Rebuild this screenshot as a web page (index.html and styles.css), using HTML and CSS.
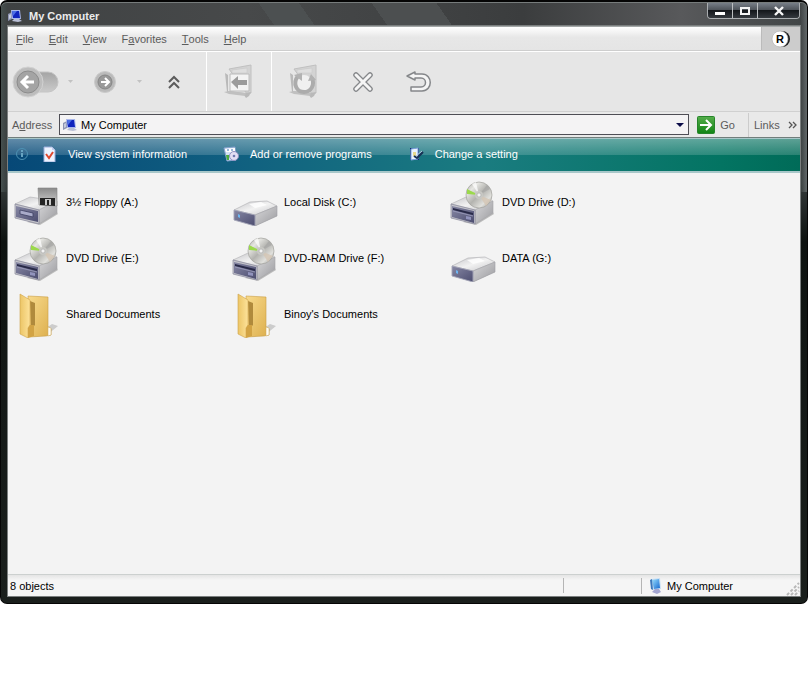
FILE: index.html
```html
<!DOCTYPE html>
<html lang="en">
<head>
<meta charset="utf-8">
<title>My Computer</title>
<link rel="stylesheet" href="styles.css">
</head>
<body>
<svg class="defs" aria-hidden="true">
  <defs>
    <linearGradient id="g-side" x1="0" y1="0" x2="1" y2="1"><stop offset="0" stop-color="#d8d8da"/><stop offset="1" stop-color="#9a9a9e"/></linearGradient>
    <linearGradient id="g-top" x1="0" y1="0" x2="1" y2="1"><stop offset="0" stop-color="#c4c4c8"/><stop offset=".5" stop-color="#f2f2f2"/><stop offset="1" stop-color="#c6c6ca"/></linearGradient>
    <linearGradient id="g-front" x1="0" y1="0" x2="1" y2="1"><stop offset="0" stop-color="#8788a4"/><stop offset="1" stop-color="#4c4d70"/></linearGradient>
    <linearGradient id="g-disc" x1="0" y1="0" x2="1" y2="1"><stop offset="0" stop-color="#aaaaa4"/><stop offset=".25" stop-color="#e6e6e2"/><stop offset=".5" stop-color="#b3b3af"/><stop offset=".75" stop-color="#e0e0dc"/><stop offset="1" stop-color="#919191"/></linearGradient>
    <linearGradient id="g-metal" x1="0" y1="0" x2="0" y2="1"><stop offset="0" stop-color="#8a8a8a"/><stop offset="1" stop-color="#d6d6d6"/></linearGradient>
    <linearGradient id="g-folder" x1="0" y1="0" x2="1" y2="1"><stop offset="0" stop-color="#f8da8c"/><stop offset="1" stop-color="#dcae4c"/></linearGradient>
    <linearGradient id="g-flap" x1="0" y1="0" x2="1" y2="0"><stop offset="0" stop-color="#ecc566"/><stop offset="1" stop-color="#fde29a"/></linearGradient>
    <linearGradient id="g-nav" x1="0" y1="0" x2="0" y2="1"><stop offset="0" stop-color="#a4a4a4"/><stop offset="1" stop-color="#cbcbcb"/></linearGradient>
    <linearGradient id="g-screen" x1="0" y1="0" x2="1" y2="1"><stop offset="0" stop-color="#9ae0ff"/><stop offset="1" stop-color="#1668cf"/></linearGradient>
    <linearGradient id="g-go" x1="0" y1="0" x2="0" y2="1"><stop offset="0" stop-color="#55ad4b"/><stop offset="1" stop-color="#118415"/></linearGradient>
  </defs>
  <symbol id="i-computer" viewBox="0 0 14 14">
    <path d="M0 5l4-2v7l-4 2z" fill="#8d93b2"/><path d="M1 6l2-1v4l-2 1z" fill="#c6cbdc"/>
    <path d="M3 1l9 0 1 9-9 0z" fill="#a9b6ea"/><path d="M4 2l7 0 1 7-7 0z" fill="#1023bd"/><path d="M4 2l5 0-4 5z" fill="#4d6ee4"/>
    <path d="M6 10l5 0 3 2-4 1-6-1z" fill="#b9bfd6"/>
  </symbol>
  <symbol id="i-unit" viewBox="0 0 48 48">
    <path d="M14 44l13 3 18-11-3-5z" fill="#bbb"/>
    <path d="M2 26l15-7 27 4-18 9z" fill="url(#g-top)" stroke="#b0b0b4" stroke-width=".6"/>
    <path d="M26 32l18-9v12l-18 11z" fill="url(#g-side)" stroke="#a4a4a8" stroke-width=".6"/>
    <path d="M2 26l24 6v14l-24-6z" fill="#c6c6cc" stroke="#85859a" stroke-width=".7"/>
  </symbol>
  <symbol id="i-floppy" viewBox="0 0 48 48">
    <use href="#i-unit"/>
    <path d="M3 28l22 5v11l-22-5z" fill="url(#g-front)"/><path d="M7 32l13 3v4l-13-3z" fill="#a9abc9" stroke="#3e4062" stroke-width=".8"/>
    <path d="M25 10h19v18l-18-1z" fill="url(#g-metal)" stroke="#858585" stroke-width=".6"/>
    <path d="M27 20h15v8l-15-1z" fill="#242424"/><path d="M32 21h6v6h-6z" fill="#c9c9c9"/><path d="M34 22h2v5h-2z" fill="#202020"/>
  </symbol>
  <symbol id="i-dvd" viewBox="0 0 48 48">
    <use href="#i-unit"/>
    <path d="M3 28l22 5v12l-22-6z" fill="url(#g-front)"/><path d="M4 30l20 5v2l-20-5z" fill="#282a48"/><path d="M4 33l20 5" stroke="#9fa1c0" stroke-width=".8"/><path d="M17 38l5 1v3l-5-1z" fill="#9193bc"/>
    <circle cx="30" cy="17" r="13" fill="url(#g-disc)" stroke="#a0a09c" stroke-width=".7"/>
    <path d="M30 17L18 16l0-5z" fill="#9bd94b"/><path d="M30 17L23 6l4-2z" fill="#fff" opacity=".7"/><path d="M30 17l12 5-5 6z" fill="#d5c5b4" opacity=".8"/><path d="M30 17L38 7l3 4z" fill="#a7a7a5" opacity=".7"/>
    <circle cx="30" cy="17" r="4" fill="#c8c8c4"/><circle cx="30" cy="17" r="2" fill="#f3f3f3" stroke="#aaa" stroke-width=".6"/>
  </symbol>
  <symbol id="i-disk" viewBox="0 0 48 48">
    <path d="M14 45l10 3 22-10-3-5z" fill="#bbb"/>
    <path d="M3 32l16-8 17-1 10 5-22 9z" fill="url(#g-top)" stroke="#acacb0" stroke-width=".6"/>
    <path d="M24 37l22-9v10l-22 10z" fill="url(#g-side)" stroke="#a0a0a4" stroke-width=".6"/>
    <path d="M3 32l21 5v11l-21-6z" fill="url(#g-front)" stroke="#a5a6b8" stroke-width=".9"/>
    <path d="M18 26l12-2 6 3-12 3z" fill="#fff" opacity=".8"/><path d="M7 36l2 1v3l-2-1z" fill="#6eb6f2"/>
  </symbol>
  <symbol id="i-folder" viewBox="0 0 48 48">
    <path d="M20 47l19-13 6 2-11 9z" fill="#ccc"/>
    <path d="M15 6l20 1v30l3 2v6l-5 1-17 1z" fill="url(#g-folder)" stroke="#c99d45" stroke-width=".6"/>
    <path d="M17 11l5 2v22l-4 4z" fill="#b08a3c"/>
    <path d="M35 37l3 1v7l-3 1z" fill="#fffdf4" stroke="#c9a75b" stroke-width=".5"/>
    <path d="M7 4l10 6v25l-2 3v10l-8-4z" fill="url(#g-flap)" stroke="#cfa24b" stroke-width=".6"/>
    <path d="M17 35l4 0v11l-6 2V38z" fill="#d2a344"/>
  </symbol>
  <symbol id="i-bin" viewBox="0 0 32 36">
    <path d="M6 5l22-4v28l-4 1z" fill="#d3d3d3" stroke="#c0c0c0"/><path d="M9 6l15-2v5H9z" fill="#dedede" stroke="#c4c4c4" stroke-width=".5"/>
    <path d="M2 9l3 2v16l17 2 6-1-2 4-3 2-2-3-10-1-7-2z" fill="#b9b9b9"/><path d="M1 28l5-1 17 2-1 3-16-2z" fill="#c0c0c0"/>
  </symbol>
</svg>

<main class="window">
  <header class="titlebar">
    <svg class="icon14"><use href="#i-computer"/></svg>
    <h1>My Computer</h1>
    <div class="controls">
      <button aria-label="Minimize"><svg width="12" height="10"><path d="M1 6h10v3H1z" fill="#fff"/></svg></button>
      <button aria-label="Maximize"><svg width="12" height="10"><path d="M2 2h8v6H2z" fill="none" stroke="#f4f4f4" stroke-width="2"/></svg></button>
      <button class="close" aria-label="Close"><svg width="12" height="10"><path d="M2 1l8 8M10 1L2 9" stroke="#f6f6f6" stroke-width="2.4"/></svg></button>
    </div>
  </header>

  <div class="client">
    <nav class="menubar">
      <button><u>F</u>ile</button><button><u>E</u>dit</button><button><u>V</u>iew</button><button>F<u>a</u>vorites</button><button><u>T</u>ools</button><button><u>H</u>elp</button>
      <span class="brand"><svg width="20" height="20"><circle cx="11" cy="10" r="8" fill="#1b1b1b"/><circle cx="9" cy="10" r="8" fill="#fff" stroke="#aaa" stroke-width=".6"/></svg><b>R</b></span>
    </nav>

    <div class="toolbar">
      <div class="group nav-group">
        <button aria-label="Back"><svg width="48" height="32">
          <rect x="12" y="6" width="34" height="20" rx="10" fill="url(#g-nav)" stroke="#c4c4c4"/>
          <circle cx="16" cy="16" r="15" fill="#bdbdbd" stroke="#d2d2d2"/><circle cx="16" cy="16" r="11" fill="#a4a4a4" stroke="#8c8c8c"/>
          <path d="M22 16H11M16 10l-6 6 6 6" fill="none" stroke="#fff" stroke-width="3"/></svg></button>
        <button class="drop" aria-label="Back history"><svg width="5" height="3"><path d="M0 0h5L2.500 3z" fill="#c2c2c2"/></svg></button>
        <button aria-label="Forward"><svg width="24" height="24"><circle cx="12" cy="12" r="10.500" fill="#bababa" stroke="#cbcbcb"/><circle cx="12" cy="12" r="7" fill="#999" stroke="#868686"/><path d="M8 12h7M12 8l4 4-4 4" fill="none" stroke="#fff" stroke-width="2"/></svg></button>
        <button class="drop next" aria-label="Forward history"><svg width="5" height="3"><path d="M0 0h5L2.500 3z" fill="#c2c2c2"/></svg></button>
        <button aria-label="Up"><svg width="12" height="14"><path d="M1 7l5-5 5 5M1 13l5-5 5 5" fill="none" stroke="#5c5c5c" stroke-width="2"/></svg></button>
      </div>
      <div class="group move-group">
        <button aria-label="Move to"><svg width="32" height="36"><use href="#i-bin"/><path d="M7 10h19v17H7z" fill="#f3f3f3" stroke="#bcbcbc"/><path d="M8 18l7-6v4h9v5h-9v4z" fill="#9b9b9b"/></svg></button>
      </div>
      <div class="group edit-group">
        <button aria-label="Refresh"><svg width="32" height="36"><use href="#i-bin"/><circle cx="16" cy="19" r="8" fill="#f0f0f0"/><path d="M10 12c-6 8-1 16 6 16 7 0 11-7 8-14" fill="none" stroke="#acacac" stroke-width="4"/><path d="M6 11l8-2 0 8zM20 17l3-7 5 6z" fill="#b2b2b2"/></svg></button>
        <button aria-label="Delete"><svg width="22" height="22"><g stroke-linecap="round" fill="none"><path d="M4 4l14 14M18 4L4 18" stroke="#85878a" stroke-width="5.500"/><path d="M4 4l14 14M18 4L4 18" stroke="#f5f5f5" stroke-width="3"/></g></svg></button>
        <button aria-label="Undo"><svg width="26" height="24"><path d="M1 6l8-4v2h7c11 0 11 17 0 17H5v-4h10c6 0 6-9 0-9H9v2z" fill="#f5f5f5" stroke="#85878a" stroke-width="1.500" stroke-linejoin="round"/></svg></button>
      </div>
    </div>

    <form class="addressbar">
      <label for="address">A<u>d</u>dress</label>
      <div class="combo">
        <svg class="icon14"><use href="#i-computer"/></svg>
        <input id="address" type="text" value="My Computer">
        <button type="button" aria-label="Show addresses"><svg width="8" height="4"><path d="M0 0h8L4 4z" fill="#0c0c48"/></svg></button>
      </div>
      <button class="go" type="button"><svg width="18" height="18"><rect x=".5" y=".5" width="17" height="17" rx="1" fill="url(#g-go)" stroke="#26852a"/><path d="M3 9h11M9 4l5 5-5 5" fill="none" stroke="#fff" stroke-width="2"/></svg>Go</button>
      <button class="links" type="button">Links<svg width="9" height="8"><path d="M1 1l3 3-3 3M5 1l3 3-3 3" fill="none" stroke="#555" stroke-width="1.300"/></svg></button>
    </form>

    <div class="tasks">
      <svg class="info" width="14" height="14"><circle cx="7" cy="7" r="5.500" fill="none" stroke="#4d91b3"/><path d="M7 6v4M7 3v2" stroke="#67a4c2" stroke-width="2"/></svg>
      <a href="#info"><svg width="16" height="16"><path d="M3 1h8l3 3v12H3z" fill="#edf3ff" stroke="#9daedb"/><path d="M11 1v3h3" fill="#c4d0ef"/><path d="M5 8l3 4 4-6" fill="none" stroke="#df4930" stroke-width="2"/></svg>View system information</a>
      <a href="#programs"><svg width="16" height="16"><path d="M1 2l11-1 1 13-9 1z" fill="#d5e2f6" stroke="#87a2cc"/><path d="M2 3l10-1v4H3z" fill="#fff"/><path d="M4 4h2M8 4h2" stroke="#3c70b6"/><path d="M3 9h3v5H4z" fill="#4dac3e"/><circle cx="11" cy="10" r="4.500" fill="#e2def4" stroke="#8d91c0"/><circle cx="11" cy="10" r="1.300" fill="#7079af"/></svg>Add or remove programs</a>
      <a href="#settings"><svg width="16" height="16"><path d="M2 2h9v12H2z" fill="#142e70"/><path d="M3 3l7-1v11l-7 1z" fill="#eaf2ff" stroke="#7aa3dc"/><path d="M5 6h3v4H5z" fill="#e7d98e"/><path d="M6 10l3 2 6-6" fill="none" stroke="#183155" stroke-width="2"/><path d="M8 10l6-5" stroke="#b5cbdf"/></svg>Change a setting</a>
    </div>

    <section class="files" aria-label="Contents">
      <a href="#a"><svg><use href="#i-floppy"/></svg>3½ Floppy (A:)</a>
      <a href="#c"><svg><use href="#i-disk"/></svg>Local Disk (C:)</a>
      <a href="#d"><svg><use href="#i-dvd"/></svg>DVD Drive (D:)</a>
      <a href="#e"><svg><use href="#i-dvd"/></svg>DVD Drive (E:)</a>
      <a href="#f"><svg><use href="#i-dvd"/></svg>DVD-RAM Drive (F:)</a>
      <a href="#g"><svg><use href="#i-disk"/></svg>DATA (G:)</a>
      <a href="#shared"><svg><use href="#i-folder"/></svg>Shared Documents</a>
      <a href="#binoy"><svg><use href="#i-folder"/></svg>Binoy's Documents</a>
    </section>

    <footer class="status">
      <span class="count">8 objects</span>
      <span class="pane"></span>
      <span class="place"><svg width="14" height="16"><path d="M2 1l9-1 1 11-8 1z" fill="#c7def3"/><path d="M3 2l7-1 1 9-6 1z" fill="url(#g-screen)"/><path d="M1 2l2-1 1 11-2-1z" fill="#3d78bb"/><path d="M6 11h4l2 3-4 2-5-2z" fill="#a3a6d1"/></svg>My Computer</span>
      <svg class="grip" width="14" height="14"><path d="M1 13L13 1M5 13l8-8M9 13l4-4" stroke="#b8b8b8" stroke-width="2" stroke-dasharray="3 2"/></svg>
    </footer>
  </div>
</main>
</body>
</html>
```
FILE: styles.css
```css
* { box-sizing: border-box; }
body { margin: 0; background: #fff; color: #000; font: 11px/14px "Liberation Sans", Arial, sans-serif; }
button { display: flex; align-items: center; justify-content: center; margin: 0; padding: 0; border: 0; background: none; color: inherit; font: inherit; }
a { color: inherit; text-decoration: none; }
svg { display: block; flex: none; }
.defs { position: absolute; width: 0; height: 0; }
.icon14 { width: 14px; height: 14px; }

.window {
  display: flex; flex-direction: column;
  height: calc(100vh - 76px); min-height: 400px;
  padding: 0 7px 7px;
  border: 1px solid #050505; border-top-width: 2px; border-radius: 7px;
  background: linear-gradient(90deg, #46504f 0, transparent 7px, transparent calc(100% - 7px), #626869 100%) top / 100% 190px no-repeat, linear-gradient(#3e4243, #353b3b 180px, #0d1210 240px, #141917 400px, #1a1f1c);
  box-shadow: inset 0 1px #767a7a;
}
.titlebar {
  display: flex; align-items: flex-start; height: 24px; flex: none;
  background: linear-gradient(55deg, transparent 0 33%, #4c5051 33% 38%, transparent 38% 47%, #4c4f50 47% 55%, transparent 55% 100%), linear-gradient(90deg, #3f4243, #47494a 30%, #414344 50%, #3b3d3e 65%, #58595b 85%, #424647);
  border-top: 1px solid #777c7c;
}
.titlebar .icon14 { margin: 6px 7px 0 0; }
.titlebar h1 { flex: 1; margin: 6px 0 0; color: #ececec; font-size: 11px; line-height: 14px; }
.controls { display: flex; border: 1px solid #aaadb0; border-top: 0; border-radius: 0 0 4px 4px; overflow: hidden; }
.controls button { width: 25px; height: 15px; border-right: 1px solid #bcbfc1; background: linear-gradient(#777e87, #4b5056 50%, #15181c 50%, #35393e); }
.controls .close { width: 41px; border: 0; }

.client { display: flex; flex: 1; flex-direction: column; min-height: 0; border-top: 1px solid #a3a7a7; background: #f3f3f3; box-shadow: 0 0 0 1px #7b7f7f; }
.menubar { display: flex; height: 24px; flex: none; gap: 15px; padding-left: 8px; border-bottom: 1px solid #cecece; background: linear-gradient(#fff, #e7e7e7 45%, #e5e5e5); color: #5b5b5b; }
.brand { position: relative; display: flex; width: 39px; margin-left: auto; align-items: center; justify-content: center; background: #ccc; border-left: 1px solid #bbb; }
.brand b { position: absolute; left: 14px; color: #000; }

.toolbar { display: flex; height: 61px; flex: none; border-top: 1px solid #fff; border-bottom: 1px solid #d0d0d0; background: #e6e6e6; }
.group { display: flex; align-items: center; justify-content: center; border-right: 1px solid #fff; }
.nav-group { width: 199px; gap: 8px; padding-left: 4px; justify-content: flex-start; }
.nav-group .drop { margin-right: 12px; }
.nav-group .next { margin-left: 12px; margin-right: 18px; }
.move-group { width: 65px; }
.edit-group { gap: 32px; padding-left: 16px; border: 0; }

.addressbar { display: flex; height: 26px; flex: none; align-items: center; margin: 0; padding-left: 4px; border-bottom: 1px solid #717e7c; background: #e9e9e9; color: #5b5b5b; }
.addressbar label { width: 47px; }
.combo { display: flex; flex: 1; min-width: 0; height: 21px; align-items: center; padding: 0 4px 0 3px; border: 1px solid #4e4e55; background: #f4f3f4; }
.combo input { flex: 1; min-width: 0; height: 18px; padding: 0 0 0 4px; border: 0; outline: 0; background: none; color: #000; font: inherit; }
.go { height: 22px; gap: 5px; padding: 0 13px 0 8px; }
.links { height: 24px; width: 52px; padding-left: 5px; gap: 8px; justify-content: flex-start; border-left: 1px solid #ccc; }

.tasks { display: flex; height: 35px; flex: none; align-items: center; padding: 0 7px 3px; border: 1px solid #a8c7c9; border-width: 1px 0 2px; color: #fff;
  background: linear-gradient(#ffffff5c, #ffffff29 50%, transparent 50%), linear-gradient(90deg, #064877, #105f80 28%, #1a7c80 60%, #037462 90%, #006b58); }
.tasks .info { margin-right: 12px; }
.tasks a { display: flex; align-items: center; gap: 11px; margin-right: 36px; }

.files { display: grid; flex: 1; min-height: 0; grid-template-columns: repeat(auto-fill, 218px); grid-auto-rows: 56px; padding: 5px 5px 0; align-content: start; overflow: hidden; }
.files a { display: flex; height: 48px; align-items: center; gap: 5px; }
.files svg { width: 48px; height: 48px; }

.status { display: flex; height: 22px; flex: none; align-items: center; border-top: 1px solid #ccd0cf; background: linear-gradient(#e4e4e4, #f5f5f5 5px); }
.count { flex: 1; padding-left: 2px; }
.pane { width: 78px; height: 15px; border-left: 1px solid #b5b5b5; }
.place { display: flex; width: 145px; height: 16px; align-items: center; gap: 4px; padding-left: 7px; border-left: 1px solid #b5b5b5; }
.grip { align-self: flex-end; }
```
